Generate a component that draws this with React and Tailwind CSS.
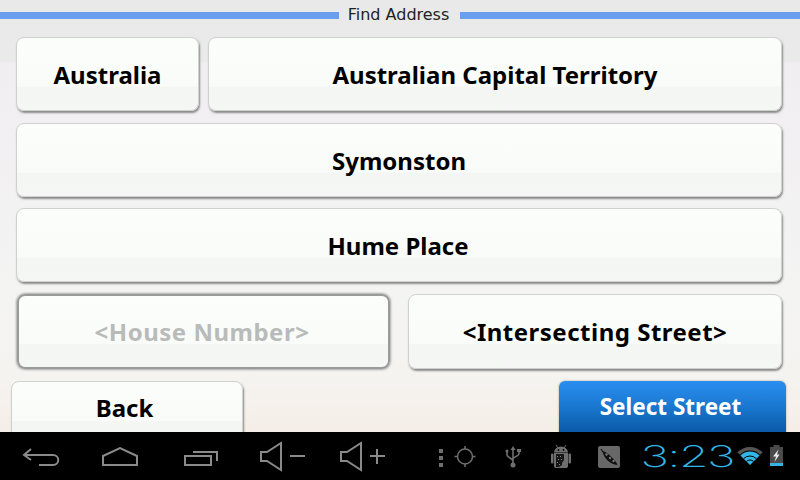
const claseBoton =
  'flex items-center justify-center rounded-[8px] bg-[linear-gradient(180deg,#fcfefc_0%,#f9fbf9_67%,#f3f6f3_68%,#f5f6f5_100%)]';
const claseNormal = 'border border-[#cfd1cf] text-black shadow-[1px_2px_2px_rgba(70,70,70,0.6)]';
const claseFila = "text-[24px] font-bold font-['Noto_Sans',sans-serif]";

const gris = '#8a8a8a';

function Boton({ children, className = '', apagado = false }) {
  return (
    <div className={`${claseBoton} ${apagado ? 'border-2 border-[#999b99] text-[#b9bbb9] shadow-[0_0_2px_1px_rgba(110,110,110,0.55)]' : claseNormal} ${className}`}>
      {children}
    </div>
  );
}

function Atras() {
  return (
    <svg width="40" height="48" className="ml-[20px]" fill="none" stroke={gris} strokeWidth="2">
      <path d="M11 17l-7 6 7 5M4 23h29c7 0 7 10 0 10H19" />
    </svg>
  );
}

function Inicio() {
  return (
    <svg width="40" height="48" className="ml-[40px]" fill="none" stroke={gris} strokeWidth="2">
      <path d="M3 33v-9l17-8 17 8v9z" />
    </svg>
  );
}

function Recientes() {
  return (
    <svg width="40" height="48" className="ml-[40px]" fill="none" stroke={gris} strokeWidth="2">
      <path d="M5 24h26v9H5zM13 20h24v9" />
    </svg>
  );
}

function Volumen({ mas, className }) {
  return (
    <svg width="48" height="48" className={className} fill="none" stroke={gris} strokeWidth="2">
      <path d="M3 20h6l14-9v27l-14-9H3z" />
      <path d="M32 24h15" />
      {mas && <path d="M39 17v15" />}
    </svg>
  );
}

function Mira() {
  return (
    <svg width="42" height="48" className="ml-[50px]" fill="none" stroke="#6f6f6f" strokeWidth="1.5">
      <path d="M3 17h4v4H3zM3 24h4v4H3zM3 31h4v4H3z" fill="#6f6f6f" stroke="none" />
      <circle cx="29" cy="24.5" r="7.5" />
      <path d="M29 14v3M29 32v3M18.500 24.500h3M36.500 24.500h3" />
    </svg>
  );
}

function Usb() {
  return (
    <svg width="20" height="48" className="ml-[25px]" fill="none" stroke="#6f6f6f" strokeWidth="1.600">
      <path d="M10 16v17M4 20v3c0 2 6 4 6 6M16 19v3c0 2-6 3-6 5" />
      <path d="M10 14l-2.500 4h5zM14 17h4v3h-4z" fill="#6f6f6f" stroke="none" />
      <path d="M2.500 19a1.500 1.500 0 1 0 3 0a1.500 1.500 0 1 0-3 0z" fill="#6f6f6f" stroke="none" />
      <circle cx="10" cy="33" r="2.500" fill="#6f6f6f" stroke="none" />
    </svg>
  );
}

function Androide() {
  return (
    <svg width="26" height="48" className="ml-[25px]">
      <path d="M6 20.500a7 6 0 0 1 14 0z" fill="#6f6f6f" />
      <path d="M8 13l2 3M18 13l-2 3" stroke="#6f6f6f" />
      <path d="M6 21h14v13a2 2 0 0 1-2 2H8a2 2 0 0 1-2-2z" fill="#6f6f6f" />
      <rect x="3" y="21.500" width="2.500" height="10" rx="1" fill="#6f6f6f" />
      <rect x="20.500" y="21.500" width="2.500" height="10" rx="1" fill="#6f6f6f" />
      <path d="M8 22h8v6l-2 3v2l-3 2H8z" fill="#161616" />
      <path d="M9 24h1v1H9zM12 24h1v1h-1zM10 27h1v1h-1zM13 27h1v1h-1zM9 30h1v1H9zM11 32h1v1h-1z" fill="#8a8a8a" />
      <circle cx="10.500" cy="18" r="0.900" fill="#000" />
      <circle cx="15.500" cy="18" r="0.900" fill="#000" />
    </svg>
  );
}

function Vaina() {
  return (
    <svg width="24" height="48" className="ml-[23px]">
      <rect x="1" y="14" width="22" height="22" rx="2" fill="#686868" />
      <path d="M5.500 19c1 7 7 13 15 14-1-3-3-5-5-7-3-3-6-6-10-7z" fill="#111" />
      <path d="M4 17l2 3" stroke="#111" strokeWidth="1.200" />
      <circle cx="9.500" cy="22.500" r="1.200" fill="#777" />
      <circle cx="13" cy="26" r="1.200" fill="#777" />
      <circle cx="16.500" cy="29" r="1.200" fill="#777" />
    </svg>
  );
}

function Wifi() {
  return (
    <svg width="28" height="48" className="ml-[2px]" fill="none">
      <path d="M15 33L2.300 20.300A18 18 0 0 1 27.700 20.300z" fill="#555" />
      <path d="M15 33L4.750 22.750A14.500 14.500 0 0 1 25.250 22.750z" fill="#000" />
      <path d="M15 33L5.450 23.450A13.500 13.500 0 0 1 24.550 23.450z" fill="#33b5e5" />
      <path d="M8.640 26.640A9 9 0 0 1 21.360 26.640" stroke="#000" />
      <path d="M11.460 29.460A5 5 0 0 1 18.540 29.460" stroke="#000" />
    </svg>
  );
}

function Bateria() {
  return (
    <svg width="17" height="48" className="ml-[5px]">
      <path d="M2 15h3.500v-2h6v2H15v19H2z" fill="#4a4a4a" />
      <rect x="2" y="31" width="13" height="3" fill="#33b5e5" />
      <path d="M10.500 17.500L5 24.500h3L6.500 30l5-7.500H9z" fill="#e8e8e8" />
    </svg>
  );
}

export default function App() {
  return (
    <div className="flex h-[480px] w-[800px] flex-col overflow-hidden font-['DejaVu_Sans',sans-serif]">
      <main className="min-h-0 flex-1 overflow-hidden bg-[linear-gradient(180deg,#e8e9e8_0px,#e9eae9_61px,#f1eef1_63px,#f4f4f3_300px,#f5f3f0_380px,#f5eee7_432px)]">
        <header className="flex h-[37px] items-start">
          <div className="mt-[12px] h-[7px] w-[339px] bg-[#6a9ff0]" />
          <h1 className="mt-[3px] flex-1 pr-[2px] text-center text-[16px] leading-[24px] font-normal text-[#222]">Find Address</h1>
          <div className="mt-[12px] h-[7px] w-[340px] bg-[#6a9ff0]" />
        </header>

        <div className={`flex h-[74px] gap-[9px] pr-[18px] pl-[16px] ${claseFila}`}>
          <Boton className="w-[183px] pt-[2px]">Australia</Boton>
          <Boton className="flex-1 pt-[2px]">Australian Capital Territory</Boton>
        </div>

        <div className={`mt-[12px] flex h-[74px] pr-[18px] pl-[16px] ${claseFila}`}>
          <Boton className="flex-1 pt-[2px]">Symonston</Boton>
        </div>

        <div className={`mt-[11px] flex h-[74px] pr-[18px] pl-[16px] ${claseFila}`}>
          <Boton className="flex-1 pt-[2px] pr-[2px]">Hume Place</Boton>
        </div>

        <div className={`mt-[12px] flex h-[75px] gap-[18px] pr-[18px] pl-[17px] tracking-[0.5px] ${claseFila}`}>
          <Boton apagado className="w-[373px] pr-[3px]">&lt;House Number&gt;</Boton>
          <Boton className="flex-1">&lt;Intersecting Street&gt;</Boton>
        </div>

        <div className={`mt-[12px] flex h-[60px] justify-between pr-[14px] pl-[11px] ${claseFila}`}>
          <Boton className="w-[232px] items-start pt-[12px] pr-[5px] leading-[28px]">Back</Boton>
          <div className="flex w-[227px] justify-center rounded-[6px] bg-[linear-gradient(180deg,#2a8ef0_0px,#1a78d0_25px,#0a5aa8_51px)] pt-[12px] pr-[4px] text-[22.500px] leading-[28px] text-white shadow-[0_0_2px_rgba(90,90,90,0.6)]">
            Select Street
          </div>
        </div>
      </main>

      <nav className="flex h-[48px] shrink-0 items-start bg-black">
        <Atras />
        <Inicio />
        <Recientes />
        <Volumen className="ml-[38px]" />
        <Volumen mas className="ml-[32px]" />
        <Mira />
        <Usb />
        <Androide />
        <Vaina />
        <div className="ml-[21px] flex h-[48px] w-[91px] items-center justify-center">
          <span className="inline-block origin-center scale-x-[1.6] font-['Inter',sans-serif] text-[30px] leading-none font-extralight tracking-[-1px] whitespace-nowrap text-[#33b5e5]">3:23</span>
        </div>
        <Wifi />
        <Bateria />
      </nav>
    </div>
  );
}
